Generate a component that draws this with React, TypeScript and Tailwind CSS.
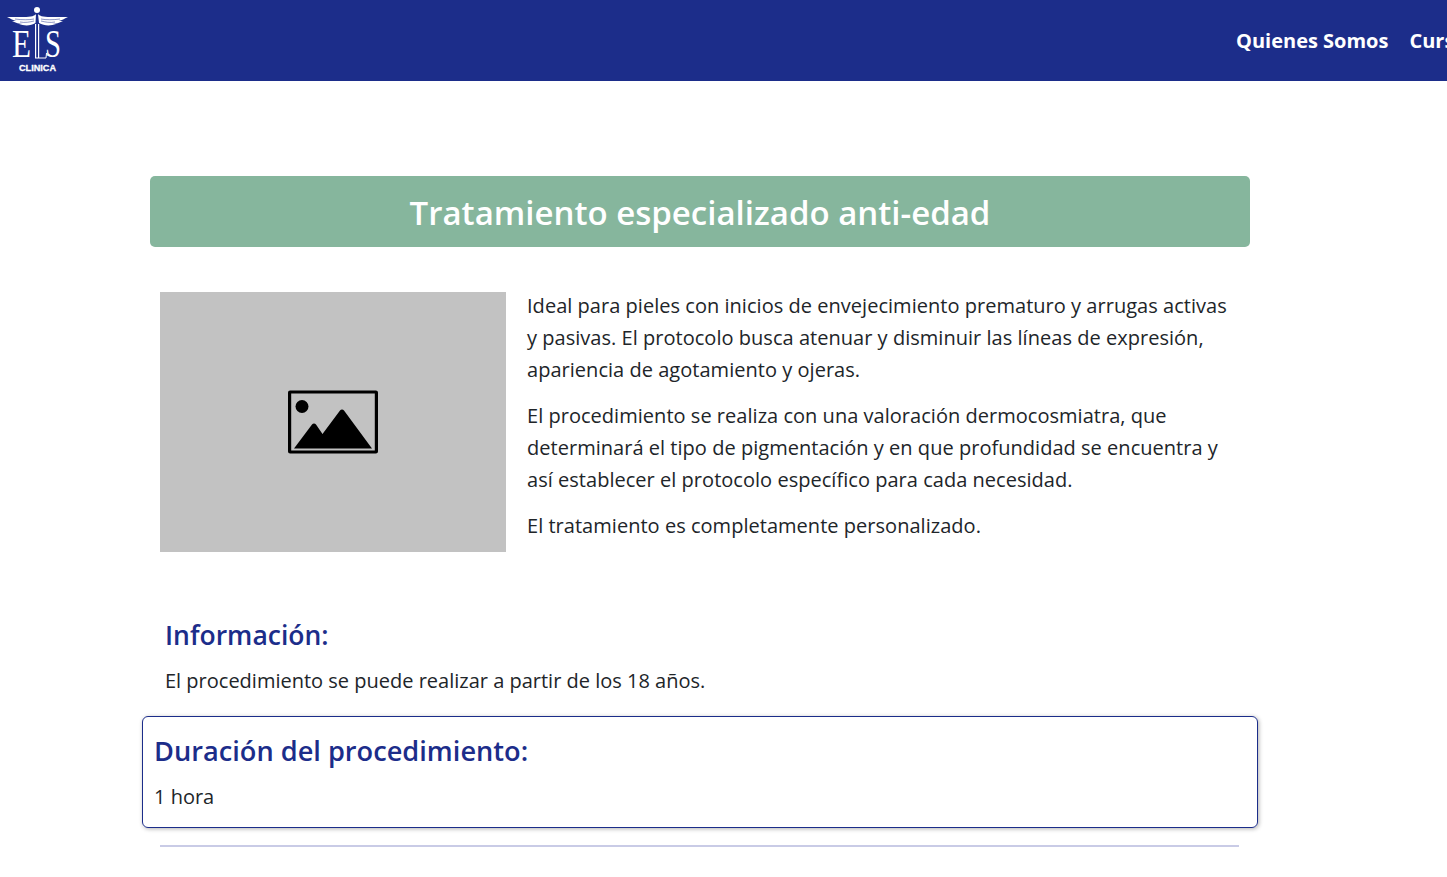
const font = "[font-family:'Open_Sans','Noto_Sans',sans-serif]";

function Logo() {
  return (
    <svg width="64" height="70" viewBox="0 0 64 70" className="block">
      <circle cx="31" cy="4" r="3" fill="#fff" />
      <path d="M30 8 C27 12 17 11 1 11 C5 13 7 14 10 15 C8 15 7 15 6 15 C10 17 13 18 17 18 C15 18 14 18 13 18 C18 20 25 20 29.5 17 Z" fill="#fff" />
      <path d="M32 8 C35 12 45 11 62 11 C58 13 56 14 53 15 C55 15 56 15 57 15 C53 17 50 18 46 18 C48 18 49 18 50 18 C45 20 38 20 33 17 Z" fill="#fff" />
      <path d="M9 13 C16 14 23 14 28 13 M14 16 C19 17 24 16 28 15 M54 13 C47 14 40 14 35 13 M49 16 C44 17 39 16 35 15" stroke="#1c2d8a" strokeWidth="0.5" fill="none" />
      <text x="6" y="51" fontFamily="Liberation Serif" fontSize="41" fill="#fff" textLength="19" lengthAdjust="spacingAndGlyphs">E</text>
      <rect x="29" y="18" width="1.2" height="34" fill="#fff" />
      <rect x="32" y="18" width="1.2" height="34" fill="#fff" />
      <path d="M29 52 H40 L40.5 47" stroke="#fff" strokeWidth="1" fill="none" />
      <text x="39" y="51" fontFamily="Liberation Serif" fontSize="41" fill="#fff" textLength="16" lengthAdjust="spacingAndGlyphs">S</text>
      <text x="13" y="65" fontFamily="Liberation Sans" fontWeight="700" fontSize="9" fill="#fff" stroke="#fff" strokeWidth="0.3" textLength="37" lengthAdjust="spacingAndGlyphs">CLINICA</text>
    </svg>
  );
}

function Placeholder() {
  return (
    <svg width="90" height="64" viewBox="0 0 90 64" className="block">
      <rect x="1.6" y="2" width="86.8" height="60" rx="0.5" fill="none" stroke="#000" strokeWidth="3.2" strokeLinejoin="round" />
      <circle cx="14" cy="16.5" r="6.5" fill="#000" />
      <path d="M6 58.5 L24 34.5 C25 33 27 33 28 34.5 L34.5 44 L52 20.5 C53 19 55 19 56 20.5 L84 58.5 Z" fill="#000" />
    </svg>
  );
}

export default function App() {
  return (
    <div className={`${font} h-[877px] overflow-hidden bg-white text-[#212529]`}>
      <header className="flex h-[81px] overflow-hidden bg-[#1c2d8a]">
        <div className="w-[1236px] shrink-0 pl-[6px] pt-[6px]">
          <Logo />
        </div>
        <nav className="flex shrink-0 items-center gap-[21px] text-[20px] font-bold whitespace-nowrap text-white">
          <a>Quienes Somos</a>
          <a>Cursos</a>
        </nav>
      </header>

      <main className="ml-[150px] w-[1100px] pt-[95px]">
        <h1 className="flex h-[71px] items-center justify-center rounded-[5px] bg-[#86b69d] pt-[2px] text-[33px] font-semibold text-white">
          Tratamiento especializado anti-edad
        </h1>

        <section className="mt-[45px] flex pl-[10px]">
          <div className="flex h-[260px] w-[346px] shrink-0 items-center justify-center bg-[#c2c2c2]">
            <Placeholder />
          </div>
          <div className="ml-[21px] w-[712px] text-[20px] leading-[32px] tracking-[0.03px]">
            <p className="-mt-[2px] mb-[14px]">
              Ideal para pieles con inicios de envejecimiento prematuro y arrugas activas y pasivas. El protocolo busca atenuar y disminuir las líneas de expresión, apariencia de agotamiento y ojeras.
            </p>
            <p className="mb-[14px]">
              El procedimiento se realiza con una valoración dermocosmiatra, que determinará el tipo de pigmentación y en que profundidad se encuentra y así establecer el protocolo específico para cada necesidad.
            </p>
            <p>El tratamiento es completamente personalizado.</p>
          </div>
        </section>

        <section className="mt-[64px] pl-[15px]">
          <h2 className="text-[26.5px] leading-[38px] font-semibold text-[#1c2d8a]">Información:</h2>
          <p className="mt-[11px] text-[20px] leading-[32px]">
            El procedimiento se puede realizar a partir de los 18 años.
          </p>
        </section>

        <section className="mt-[19px] -ml-[8px] h-[112px] w-[1116px] rounded-[6px] border border-[#1c2d8a] pt-[14px] pl-[11px] shadow-[1px_1px_4px_rgba(0,0,0,0.3)]">
          <h2 className="text-[27.2px] leading-[40px] font-semibold text-[#1c2d8a]">Duración del procedimiento:</h2>
          <p className="mt-[10px] text-[20px] leading-[32px]">1 hora</p>
        </section>

        <hr className="mt-[17px] ml-[10px] w-[1079px] border-0 border-t-2 border-[#c9cbe6]" />
      </main>
    </div>
  );
}
